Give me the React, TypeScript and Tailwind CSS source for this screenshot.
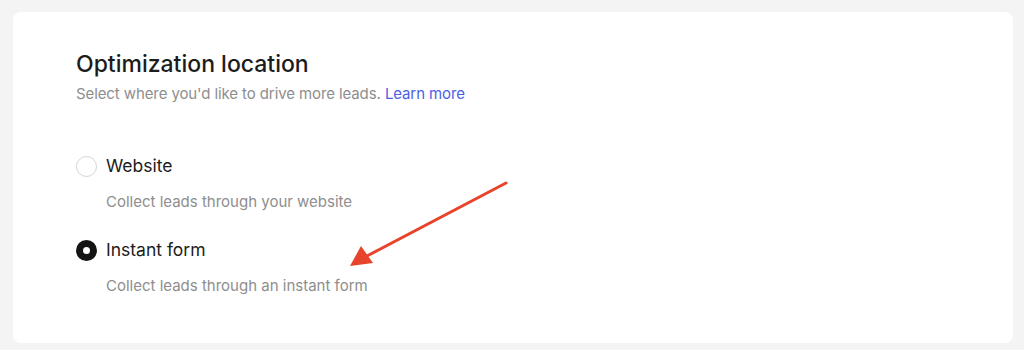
import React from "react";

function Radio({ checked }: { checked: boolean }) {
  return checked ? (
    <span className="flex h-[21px] w-[21px] shrink-0 items-center justify-center rounded-full bg-[#141414]">
      <span className="h-[7px] w-[7px] rounded-full bg-white" />
    </span>
  ) : (
    <span className="h-[21px] w-[21px] shrink-0 rounded-full border border-[#d4d4d4] bg-white" />
  );
}

function Option({ label, hint, checked }: { label: string; hint: string; checked: boolean }) {
  return (
    <div>
      <div className="flex items-center gap-[9px] h-6">
        <Radio checked={checked} />
        <span className="text-[17.5px] leading-6 text-[#1c1c1c]">{label}</span>
      </div>
      <p className="mt-[14px] pl-[30px] text-[15px] leading-5 text-[#8e8e8e]">{hint}</p>
    </div>
  );
}

export default function App() {
  return (
    <div
      className="min-h-[350px] w-full bg-[#f4f4f4] pl-[13px] pr-[11px] pt-[12px] pb-[7px]"
      style={{ fontFamily: "Inter, 'Noto Sans', sans-serif" }}
    >
      <div className="relative h-[331px] rounded-lg bg-white pl-[63px] pt-[38px]">
        <h1 className="text-[23px] font-medium leading-7 text-[#1c1c1c]">Optimization location</h1>
        <p className="mt-[6px] text-[15px] leading-5 tracking-[-0.1px] text-[#8e8e8e]">
          Select where you'd like to drive more leads.{" "}
          <a className="text-[#4b5fe6]">Learn more</a>
        </p>

        <div className="mt-[50px] flex flex-col gap-[26px]">
          <Option label="Website" hint="Collect leads through your website" checked={false} />
          <Option label="Instant form" hint="Collect leads through an instant form" checked />
        </div>

        {/* annotation arrow */}
        <svg
          className="pointer-events-none absolute left-0 top-0"
          width="1000"
          height="331"
          viewBox="0 0 1000 331"
        >
          <line x1="493" y1="171" x2="352" y2="245" stroke="#e8432b" strokeWidth="3" strokeLinecap="round" />
          <polygon points="337,254 348,234 360,251" fill="#e8432b" />
        </svg>
      </div>
    </div>
  );
}
